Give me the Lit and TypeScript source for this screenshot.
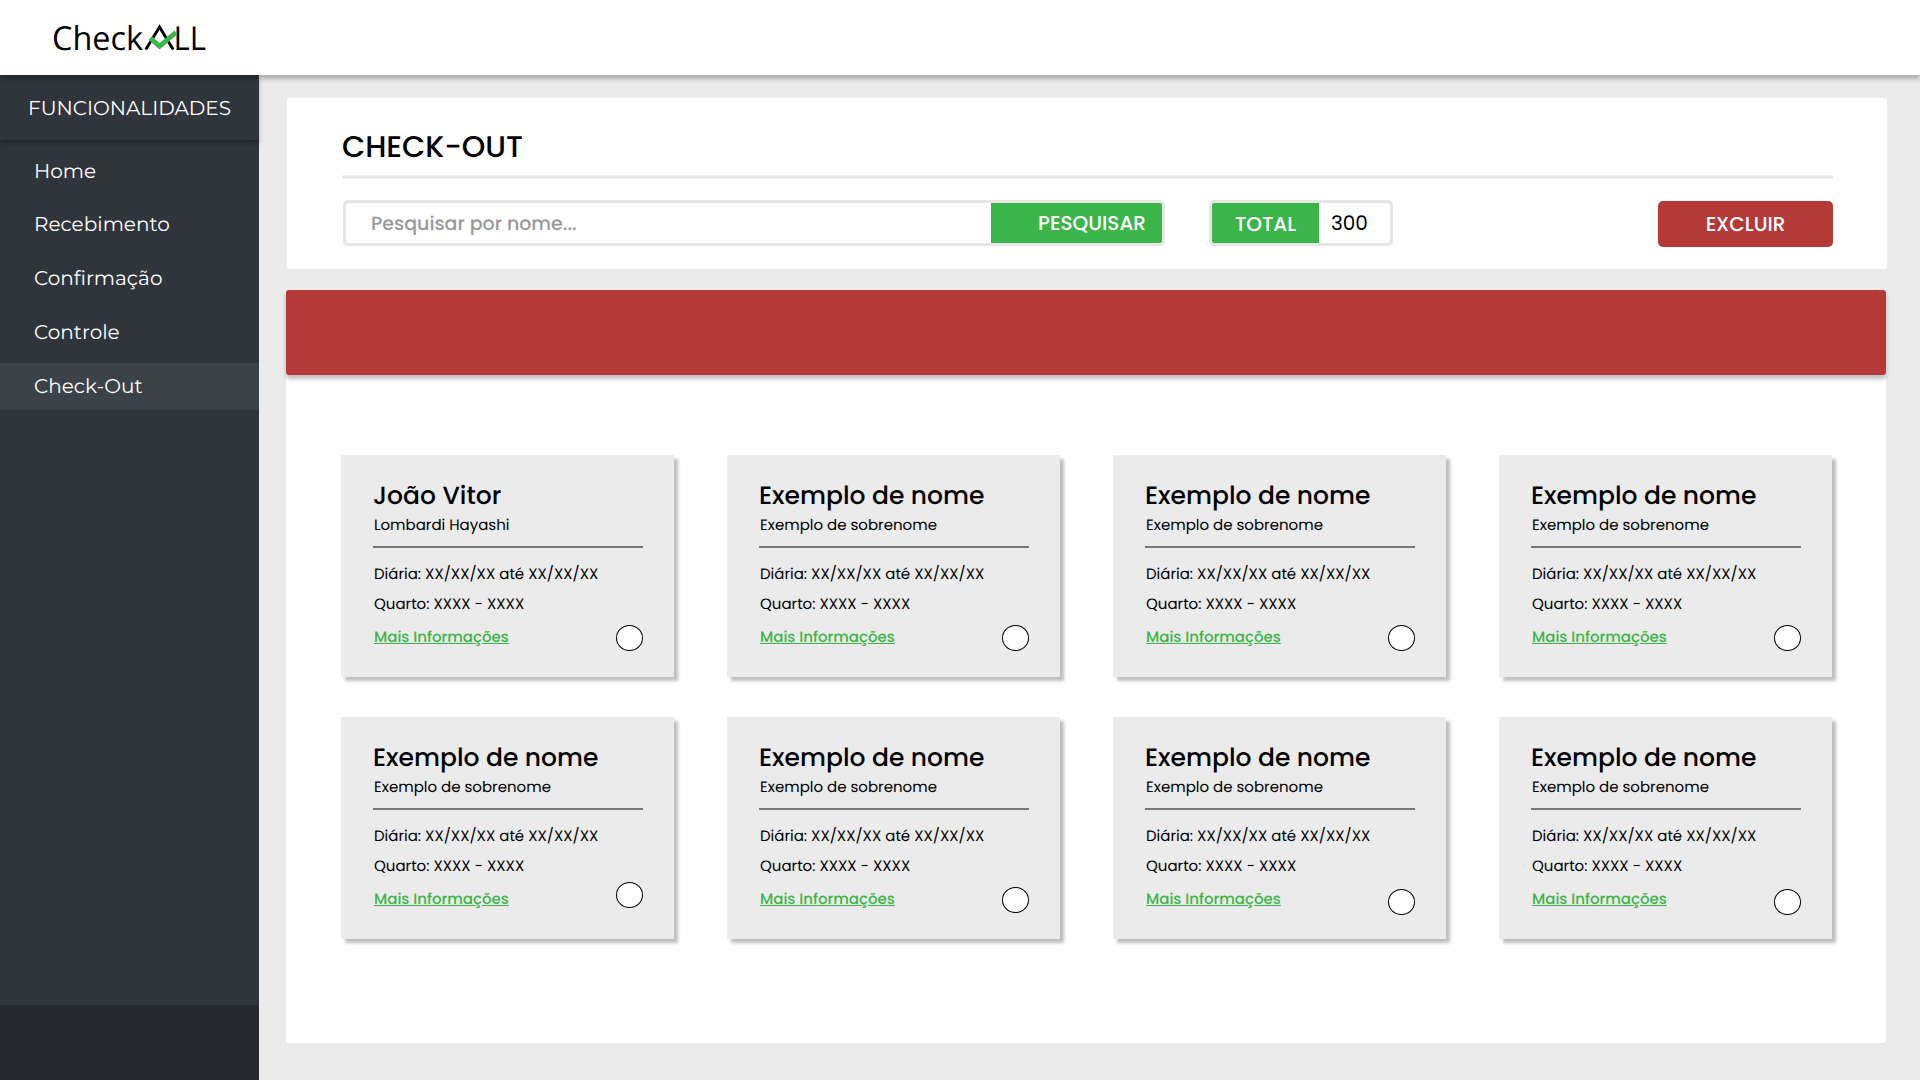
import { LitElement, html, css } from "lit";
import { customElement, property } from "lit/decorators.js";
import { classMap } from "lit/directives/class-map.js";
import { styleMap } from "lit/directives/style-map.js";

interface Guest {
  name: string;
  surname: string;
  /** Distance from the card's top edge to its selection circle. */
  pickTop: number;
}

const example = (pickTop = 170): Guest => ({
  name: "Exemplo de nome",
  surname: "Exemplo de sobrenome",
  pickTop,
});

const GUESTS: Guest[] = [
  { name: "João Vitor", surname: "Lombardi Hayashi", pickTop: 170 },
  example(),
  example(),
  example(),
  example(165),
  example(170),
  example(172),
  example(172),
];

const MENU = ["Home", "Recebimento", "Confirmação", "Controle", "Check-Out"];

@customElement("guest-card")
class GuestCard extends LitElement {
  @property({ attribute: false }) guest!: Guest;

  static styles = css`
    :host {
      display: block;
      position: relative;
      box-sizing: border-box;
      height: 222px;
      padding: 26px 31px 0 32px;
      background: #ebebeb;
      box-shadow: 4px 4px 3px rgba(0, 0, 0, 0.25);
      font: 400 15px/30px Poppins, "Open Sans", sans-serif;
      color: #000;
      white-space: nowrap;
    }
    .name {
      font-size: 25px;
      font-weight: 500;
    }
    .surname {
      margin-top: 3px;
      line-height: 24px;
    }
    .surname,
    .info,
    .more {
      padding-left: 1px;
    }
    .rule {
      height: 2px;
      margin: 8px 0 12px;
      background: #777;
    }
    .more {
      display: block;
      margin-top: 3px;
      font-weight: 500;
      color: #3bb54a;
      text-decoration: underline;
    }
    .pick {
      position: absolute;
      right: 31px;
      box-sizing: border-box;
      width: 27px;
      height: 26px;
      border: 1px solid #000;
      border-radius: 50%;
      background: #fff;
    }
  `;

  render() {
    const { name, surname, pickTop } = this.guest;
    return html`
      <div class="name">${name}</div>
      <div class="surname">${surname}</div>
      <div class="rule"></div>
      <div class="info">Diária: XX/XX/XX até XX/XX/XX</div>
      <div class="info">Quarto: XXXX - XXXX</div>
      <a class="more">Mais Informações</a>
      <span class="pick" style=${styleMap({ top: `${pickTop}px` })}></span>
    `;
  }
}

@customElement("app-root")
class AppRoot extends LitElement {
  static styles = css`
    :host {
      display: flex;
      flex-direction: column;
      width: 1920px;
      height: 1080px;
      overflow: hidden;
      background: #ebebeb;
      font-family: Poppins, "Open Sans", sans-serif;
      text-rendering: geometricPrecision;
      color: #000;
    }
    .topbar {
      position: relative;
      z-index: 1;
      flex: none;
      height: 75px;
      padding-left: 50px;
      background: #fff;
      box-shadow: 0 4px 4px rgba(0, 0, 0, 0.25);
    }
    .logo {
      display: block;
      width: 160px;
      height: 75px;
      font: 400 33px "Open Sans", "Noto Sans", sans-serif;
    }
    .body {
      flex: 1;
      display: flex;
      min-height: 0;
    }
    .sidebar {
      flex: none;
      display: flex;
      flex-direction: column;
      width: 259px;
      background: #30353c;
      color: #fff;
      font: 400 20px/49px Montserrat, Poppins, sans-serif;
    }
    .heading {
      height: 65px;
      padding-left: 28px;
      line-height: 69px;
      box-shadow: 0 4px 4px rgba(0, 0, 0, 0.25);
    }
    .menu {
      display: flex;
      flex-direction: column;
      gap: 7px;
      padding-top: 7px;
    }
    .item {
      height: 47px;
      padding-left: 34px;
    }
    .item:first-child {
      line-height: 51px;
    }
    .active {
      background: #3b4248;
    }
    .foot {
      height: 75px;
      margin-top: auto;
      background: #26292d;
    }
    .main {
      flex: 1;
      padding: 23px 33px 0 28px;
    }
    .panel {
      box-sizing: border-box;
      height: 171px;
      padding: 26px 54px 0 55px;
      border-radius: 3px;
      background: #fff;
    }
    .title {
      margin: 0;
      font-size: 30px;
      font-weight: 500;
      line-height: 45px;
    }
    .line {
      height: 4px;
      margin-top: 6px;
      background: linear-gradient(#f2f2f2 25%, #e5e5e5 25% 75%, #f2f2f2 75%);
    }
    .controls {
      display: flex;
      align-items: flex-start;
      padding: 21px 0 0 1px;
      font-size: 20px;
      line-height: 40px;
    }
    .field {
      box-sizing: border-box;
      display: flex;
      height: 46px;
      border: 3px solid #e6e6e6;
      border-radius: 5px;
    }
    .search {
      width: 822px;
      justify-content: space-between;
    }
    .placeholder {
      padding-left: 25px;
      color: #999;
      font-size: 19px;
      font-weight: 500;
      line-height: 42px;
    }
    .find {
      width: 171px;
      box-sizing: border-box;
      padding-right: 16px;
      text-align: right;
      border-radius: 0 2px 2px 0;
      background: #3bb54a;
      color: #fff;
      font-weight: 500;
    }
    .total {
      width: 184px;
      margin-left: 44px;
    }
    .label {
      width: 107px;
      line-height: 42px;
      text-align: center;
      border-radius: 2px 0 0 2px;
      background: #3bb54a;
      color: #fff;
      font-weight: 500;
    }
    .count {
      padding-left: 12px;
    }
    .delete {
      width: 175px;
      height: 46px;
      margin: 1px 0 0 auto;
      line-height: 46px;
      text-align: center;
      border-radius: 5px;
      background: #b43939;
      color: #fff;
      font-weight: 500;
    }
    .list {
      height: 753px;
      width: 1600px;
      margin: 21px 0 0 -1px;
      border-radius: 3px;
      background: #fff;
    }
    .banner {
      height: 85px;
      border-radius: 3px;
      background: #b43939;
      box-shadow: 0 4px 4px rgba(0, 0, 0, 0.25);
    }
    .cards {
      display: grid;
      grid-template-columns: repeat(4, 333px);
      justify-content: space-between;
      row-gap: 40px;
      padding: 80px 54px 0 55px;
    }
  `;

  render() {
    return html`
      <header class="topbar">
        <svg class="logo" viewBox="50 0 160 75">
          <text x="52" y="49.5" textLength="91" lengthAdjust="spacingAndGlyphs">Check</text>
          <path d="M145.8 49.5L159.5 27L173.2 49.5" fill="none" stroke="#000" stroke-width="2.9" />
          <text x="173.5" y="49.5" textLength="32.5" lengthAdjust="spacingAndGlyphs">LL</text>
          <path d="M150.3 38L159.5 46.3L176 32.3" fill="none" stroke="#3bb54a" stroke-width="5" />
        </svg>
      </header>
      <div class="body">
        <nav class="sidebar">
          <div class="heading">FUNCIONALIDADES</div>
          <div class="menu">
            ${MENU.map(
              (label) => html`<a class=${classMap({ item: true, active: label === "Check-Out" })}>${label}</a>`
            )}
          </div>
          <div class="foot"></div>
        </nav>
        <main class="main">
          <section class="panel">
            <h1 class="title">CHECK-OUT</h1>
            <div class="line"></div>
            <div class="controls">
              <div class="field search">
                <span class="placeholder">Pesquisar por nome...</span>
                <span class="find">PESQUISAR</span>
              </div>
              <div class="field total">
                <span class="label">TOTAL</span>
                <span class="count">300</span>
              </div>
              <div class="delete">EXCLUIR</div>
            </div>
          </section>
          <section class="list">
            <div class="banner"></div>
            <div class="cards">${GUESTS.map((guest) => html`<guest-card .guest=${guest}></guest-card>`)}</div>
          </section>
        </main>
      </div>
    `;
  }
}
